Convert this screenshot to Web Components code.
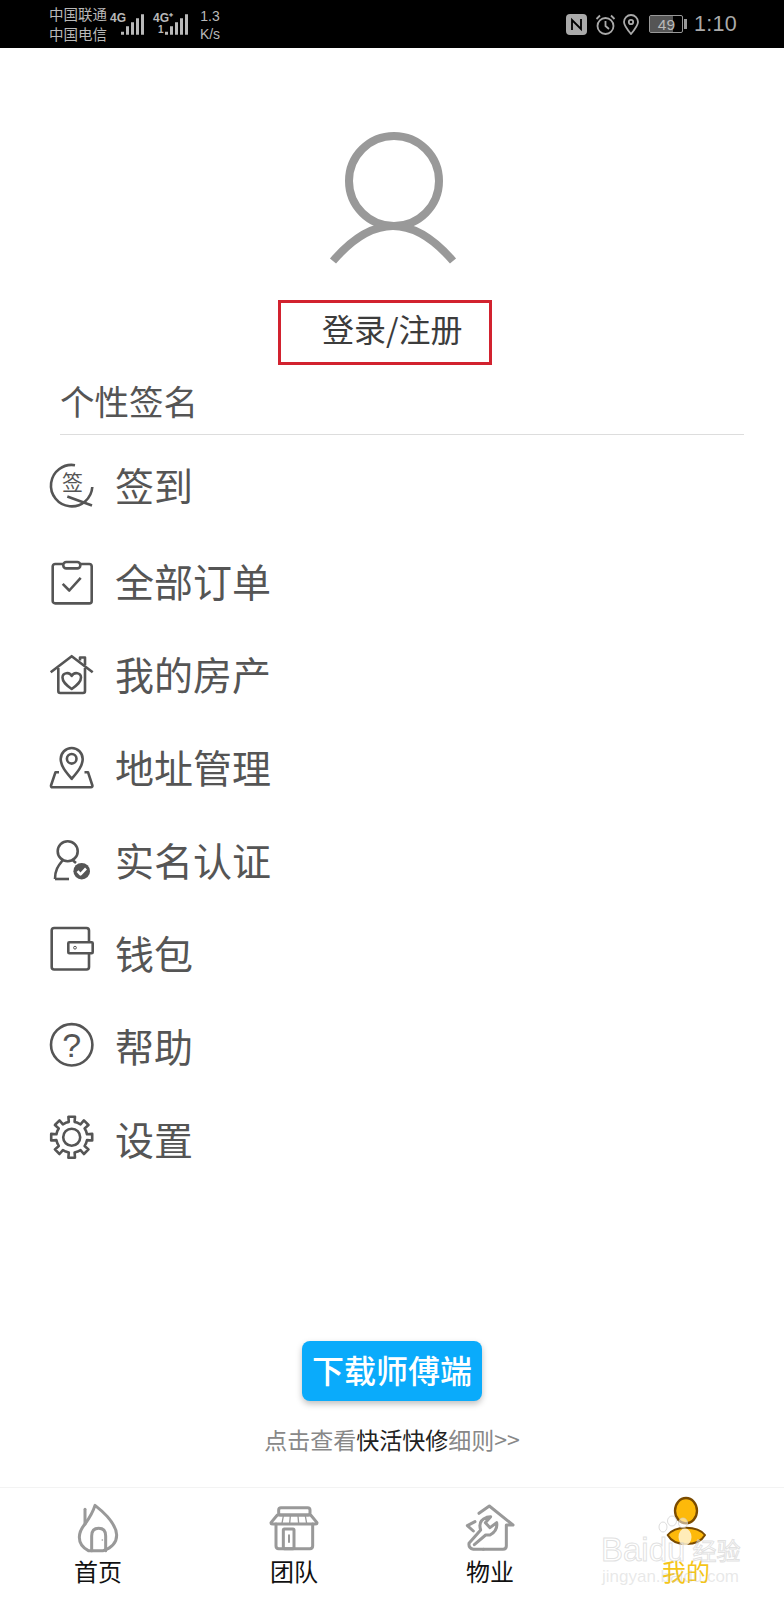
<!DOCTYPE html>
<html lang="zh">
<head>
<meta charset="utf-8">
<title>我的</title>
<style>
    html, body { margin: 0; padding: 0; background: #fff; }
    body { font-family: "Noto Sans CJK SC", "Noto Sans", sans-serif; }
</style>
</head>
<body>
<app-page>
    <status-bar></status-bar>
    <user-card name="登录/注册" sign="个性签名"></user-card>
    <menu-list>
        <menu-row icon="sign">签到</menu-row>
        <menu-row icon="order" style="margin-top:3px">全部订单</menu-row>
        <menu-row icon="house">我的房产</menu-row>
        <menu-row icon="pin">地址管理</menu-row>
        <menu-row icon="person">实名认证</menu-row>
        <menu-row icon="wallet">钱包</menu-row>
        <menu-row icon="help">帮助</menu-row>
        <menu-row icon="gear">设置</menu-row>
    </menu-list>
    <promo-block></promo-block>
    <tab-bar>
        <tab-item icon="home">首页</tab-item>
        <tab-item icon="team">团队</tab-item>
        <tab-item icon="estate">物业</tab-item>
        <tab-item icon="mine" active>我的</tab-item>
    </tab-bar>
    <baidu-mark></baidu-mark>
</app-page>

<script>
function gearPath(cx, cy, outer, root, teeth) {
    var pts = [];
    var step = Math.PI * 2 / teeth;
    for (var i = 0; i < teeth; i++) {
        var a = i * step - Math.PI / 2;
        [[-0.5, root], [-0.24, root], [-0.2, outer], [0.2, outer], [0.24, root], [0.5, root]].forEach(function (p) {
            var t = a + p[0] * step;
            pts.push((cx + Math.cos(t) * p[1]).toFixed(1) + ' ' + (cy + Math.sin(t) * p[1]).toFixed(1));
        });
    }
    return 'M' + pts.join('L') + 'Z';
}

var MENU_ICONS = {
    sign: `<path d="M25 .2A20.7 20.7 0 1 0 42.3 22"/><path d="M17.3 31.5 42 40.5"/>
        <text x="22.400" y="25" text-anchor="middle" font-size="21" fill="#555" stroke="none" font-family="Noto Sans CJK SC, sans-serif">签</text>`,
    order: `<rect x="2.700" y="3" width="39" height="39.400" rx="2.500"/>
        <rect x="13.300" y="1" width="17" height="6.400" rx="3" fill="#fff"/>
        <path d="M12.700 22.800 19.300 29.500 30.700 16.800"/>`,
    house: `<path d="M.7 18.200 21.700 2.200 42.700 18.200"/><path d="M8.300 14V37a2 2 0 0 0 2 2H33a2 2 0 0 0 2-2V14"/>
        <path d="M30 6.500V3.500h5V11"/>
        <path d="M21.700 35C16 31 12.500 28 12.500 23.500C12.500 18.500 19.500 17.500 21.700 22C24 17.500 31 18.500 31 23.500C31 28 27.400 31 21.700 35Z"/>`,
    pin: `<path d="M21.700 31.800C16 25 10.700 19 10.700 12A11 11 0 0 1 32.700 12C32.700 19 27.400 25 21.700 31.800Z"/>
        <circle cx="21.700" cy="11.800" r="4.800"/>
        <path d="M9 25.200H5.500L1 38.500Q.8 40.200 2.500 40.200H41Q42.700 40.200 42.400 38.500L38 25.200H34.500"/>`,
    person: `<circle cx="17.700" cy="11.200" r="10"/><path d="M5 39C5 30 8 26 12.500 20.500"/><path d="M5 39H19"/><path d="M23 20.500 26 23"/>
        <circle cx="31.700" cy="31.200" r="8.300" fill="#555" stroke="none"/>
        <path d="M27.500 31.200 30.500 34.400 36 28.500" stroke="#fff"/>`,
    wallet: `<path d="M39 8V-2.500A2.500 2.500 0 0 0 36.500 -5H4.200A2.500 2.500 0 0 0 1.700 -2.500V34A2.500 2.500 0 0 0 4.200 36.500H36.500A2.500 2.500 0 0 0 39 34V21"/>
        <rect x="18.300" y="9.200" width="24.400" height="11" rx="1"/>
        <circle cx="25" cy="14.700" r="1.400" stroke-width="1"/>`,
    help: `<circle cx="21.700" cy="18.800" r="20.700"/>
        <text x="21.700" y="31" text-anchor="middle" font-size="34" fill="#555" stroke="none" font-family="Liberation Sans, sans-serif">?</text>`,
    gear: `<path d="${gearPath(21.7, 18.2, 20.8, 15.6, 8)}"/><circle cx="21.700" cy="18.200" r="8.500"/>`
};

var TAB_ICONS = {
    home: {
        box: '84 45 180 180',
        body: `<path d="M135 88V132"/>
            <path d="M135 132Q118 152 118 172Q118 198 145 212H190Q230 198 230 165Q228 125 165 76Q158 100 135 132Z"/>
            <path d="M155 212V168Q155 145 176 145Q197 145 197 168V212"/>
            <circle cx="187" cy="180" r="2.500" fill="#999" stroke="none"/>`
    },
    team: {
        box: '672 45 180 180',
        body: `<rect x="716" y="83" width="94" height="22" rx="7"/>
            <path d="M712 105H812L831 128Q831 132 825 132H699Q693 132 693 128Z"/>
            <path d="M730 108 726 130M751 108 749 130M774 108 776 130M796 108 800 130" stroke-width="4"/>
            <path d="M708 132V198Q708 206 716 206H810Q818 206 818 198V132"/>
            <rect x="730" y="147" width="32" height="59" rx="3"/>
            <path d="M747 166V186" stroke-width="6"/>`
    },
    estate: {
        box: '60 45 180 180',
        body: `<path d="M117 100 148 78 219 135 199 135V198Q199 208 189 208H130"/>
            <path d="M105 125 82 137 100 153"/>
            <path d="M130 208 100 208Q85 205 87 190L122 150Q113 122 140 112L152 110 136 128 150 143 170 128Q174 152 150 165L137 165L103 194"/>`
    },
    mine: {
        box: '648 45 180 180',
        body: `<ellipse cx="738" cy="92" rx="33" ry="38" fill="#fdb90a" stroke="#7a4b00" stroke-width="7"/>
            <path d="M683 165Q700 143 738 143Q778 143 795 165Q780 192 738 192Q698 192 683 165Z" fill="#fdb90a" stroke="#7a4b00" stroke-width="6"/>`
    }
};

customElements.define('app-page', class extends HTMLElement {
    constructor() {
        super();
        this.attachShadow({ mode: 'open' }).innerHTML = `
        <style>
            :host {
                display: flex;
                flex-direction: column;
                position: relative;
                width: 784px;
                height: 1600px;
                overflow: hidden;
                background: #fff;
            }
        </style>
        <slot></slot>`;
    }
});

customElements.define('status-bar', class extends HTMLElement {
    constructor() {
        super();
        var bars = `<rect x="0" y="17.500" width="3" height="3"/><rect x="5" y="12" width="3" height="8.500"/>
            <rect x="10" y="8" width="3" height="12.500"/><rect x="15" y="4" width="3" height="16.500"/><rect x="20" y="0" width="3" height="20.500"/>`;
        this.attachShadow({ mode: 'open' }).innerHTML = `
        <style>
            :host {
                display: flex;
                align-items: center;
                height: 48px;
                flex: none;
                padding: 0 47px 0 49px;
                box-sizing: border-box;
                background: #000;
                color: #b9b9b9;
            }
            .carrier {
                display: flex;
                flex-direction: column;
                font-size: 14.500px;
                line-height: 20px;
                width: 61px;
            }
            .net { display: flex; align-items: flex-start; width: 43px; height: 24px; position: relative; }
            .net b { font: bold 12px/12px "Liberation Sans Narrow", "Liberation Sans", sans-serif; margin-top: 0; }
            .net b.two { position: absolute; left: 5px; top: 12px; margin: 0; font-size: 10px; }
            .net svg { position: absolute; right: 9px; top: 2px; }
            .speed {
                font: 14px/18px "Liberation Sans", sans-serif;
                margin-left: -4px;
                margin-top: 1px;
                text-align: center;
                width: 24px;
            }
            .right { display: flex; align-items: center; margin-left: auto; }
            .right svg { display: block; }
            .battery {
                display: flex;
                align-items: center;
                justify-content: center;
                width: 34px;
                height: 18px;
                box-sizing: border-box;
                border: 1px solid #999;
                border-radius: 2px;
                margin-left: 9px;
                font: 15.500px/15px "Liberation Sans", sans-serif;
                background: linear-gradient(90deg, #555 72%, #000 72%);
                background-clip: padding-box;
                position: relative;
            }
            .nub { width: 2.500px; height: 10px; background: #999; margin: 0 7px 0 1px; }
            .time { font: 21.500px/24px "Liberation Sans", sans-serif; letter-spacing: .3px; color: #aaa; }
        </style>
        <div class="carrier"><span>中国联通</span><span>中国电信</span></div>
        <div class="net"><b>4G</b><svg width="23" height="21" viewBox="0 0 23 20.500" fill="#b9b9b9">${bars}</svg></div>
        <div class="net" style="width:49px"><b>4G⁺</b><b class="two">1</b><svg width="23" height="21" viewBox="0 0 23 20.500" fill="#b9b9b9" style="right:14px">${bars}</svg></div>
        <div class="speed">1.3<br>K/s</div>
        <div class="right">
            <svg width="21" height="21" viewBox="0 0 21 21"><rect width="21" height="21" rx="4" fill="#aaa"/>
                <path d="M6 16V6L15 15V5" stroke="#000" stroke-width="1.800" fill="none"/></svg>
            <svg width="21" height="21" viewBox="0 0 21 21" fill="none" stroke="#aaa" stroke-width="1.800" style="margin-left:8px">
                <circle cx="10.500" cy="12" r="8"/><path d="M10.500 7V12L14 15M1.500 5 5 1.500M19.500 5 16 1.500"/></svg>
            <svg width="18" height="21" viewBox="0 0 18 21" fill="none" stroke="#aaa" stroke-width="1.800" style="margin-left:6px">
                <path d="M9 20C4 14 2 11 2 8A7 7 0 0 1 16 8C16 11 14 14 9 20Z"/><circle cx="9" cy="8" r="2.200"/></svg>
            <div class="battery">49</div><div class="nub"></div>
            <div class="time">1:10</div>
        </div>`;
    }
});

customElements.define('user-card', class extends HTMLElement {
    constructor() {
        super();
        this.attachShadow({ mode: 'open' }).innerHTML = `
        <style>
            :host { display: block; flex: none; padding-top: 84px; }
            svg { display: block; margin-left: 326px; }
            .login {
                width: 214px;
                height: 65px;
                box-sizing: border-box;
                margin: 32px 0 0 278px;
                padding-left: 41px;
                border: 3px solid #d2222f;
                color: #3c3c3c;
                font-size: 32px;
                line-height: 50px;
                white-space: nowrap;
            }
            .sign {
                height: 70px;
                box-sizing: border-box;
                margin: 0 40px 0 60px;
                border-bottom: 1px solid #ddd;
                color: #555;
                font-size: 34.500px;
                line-height: 70px;
            }
        </style>
        <svg width="136" height="136" viewBox="326 132 136 136" fill="none" stroke="#999" stroke-width="8">
            <circle cx="394" cy="181" r="45"/>
            <path d="M333 261Q393 191 453 261"/>
        </svg>
        <div class="login"></div>
        <div class="sign"></div>`;
    }
    connectedCallback() {
        this.shadowRoot.querySelector('.login').textContent = this.getAttribute('name');
        this.shadowRoot.querySelector('.sign').textContent = this.getAttribute('sign');
    }
});

customElements.define('menu-list', class extends HTMLElement {
    constructor() {
        super();
        this.attachShadow({ mode: 'open' }).innerHTML = `
        <style>
            :host { display: flex; flex-direction: column; flex: none; margin-top: 5px; }
        </style>
        <slot></slot>`;
    }
});

customElements.define('menu-row', class extends HTMLElement {
    constructor() {
        super();
        this.attachShadow({ mode: 'open' }).innerHTML = `
        <style>
            :host {
                display: flex;
                align-items: center;
                height: 93px;
                padding-left: 50px;
                color: #555;
                font-size: 39px;
            }
            svg { display: block; flex: none; overflow: visible; margin-right: 21px; }
            span { line-height: 50px; margin-bottom: 6px; }
        </style>
        <svg width="44" height="44" viewBox="0 0 44 44" fill="none" stroke="#555" stroke-width="2.600" stroke-linejoin="round"></svg>
        <span><slot></slot></span>`;
    }
    connectedCallback() {
        this.shadowRoot.querySelector('svg').innerHTML = MENU_ICONS[this.getAttribute('icon')];
    }
});

customElements.define('promo-block', class extends HTMLElement {
    constructor() {
        super();
        this.attachShadow({ mode: 'open' }).innerHTML = `
        <style>
            :host {
                display: flex;
                flex-direction: column;
                align-items: center;
                flex: none;
                margin-top: 154px;
            }
            .btn {
                width: 180px;
                height: 60px;
                border-radius: 8px;
                background: #0aabfb;
                box-shadow: 0 3px 6px rgba(0,0,0,.25);
                color: #fff;
                font-size: 32px;
                font-weight: 500;
                line-height: 56px;
                text-align: center;
                white-space: nowrap;
            }
            .tip {
                margin-top: 23px;
                font-size: 23px;
                line-height: 30px;
                color: #888;
                white-space: nowrap;
            }
            .tip b { font-weight: 400; color: #222; }
        </style>
        <div class="btn">下载师傅端</div>
        <div class="tip">点击查看<b>快活快修</b>细则&gt;&gt;</div>`;
    }
});

customElements.define('tab-bar', class extends HTMLElement {
    constructor() {
        super();
        this.attachShadow({ mode: 'open' }).innerHTML = `
        <style>
            :host {
                display: grid;
                grid-template-columns: repeat(4, 1fr);
                flex: none;
                margin-top: auto;
                height: 113px;
                box-sizing: border-box;
                padding-top: 7px;
                border-top: 1px solid #f3f3f3;
            }
        </style>
        <slot></slot>`;
    }
});

customElements.define('tab-item', class extends HTMLElement {
    constructor() {
        super();
        this.attachShadow({ mode: 'open' }).innerHTML = `
        <style>
            :host {
                display: flex;
                flex-direction: column;
                align-items: center;
                color: #111;
                font-size: 24px;
                line-height: 30px;
            }
            :host([active]) { color: #f5c518; }
            svg { display: block; overflow: visible; margin-bottom: 1px; }
        </style>
        <svg width="60" height="60" fill="none" stroke="#999" stroke-width="9" stroke-linejoin="round" stroke-linecap="round"></svg>
        <slot></slot>`;
    }
    connectedCallback() {
        var icon = TAB_ICONS[this.getAttribute('icon')];
        var svg = this.shadowRoot.querySelector('svg');
        svg.setAttribute('viewBox', icon.box);
        svg.innerHTML = icon.body;
    }
});

customElements.define('baidu-mark', class extends HTMLElement {
    constructor() {
        super();
        this.attachShadow({ mode: 'open' }).innerHTML = `
        <style>
            :host {
                position: absolute;
                left: 601px;
                top: 1512px;
                width: 145px;
                height: 76px;
                pointer-events: none;
                color: rgba(255,255,255,.35);
                font-family: "Liberation Sans", sans-serif;
            }
            svg { position: absolute; left: 0; top: 0; overflow: visible; }
            .logo {
                position: absolute;
                left: 0;
                top: 21px;
                display: flex;
                align-items: center;
                height: 34px;
                white-space: nowrap;
                font-size: 33px;
                -webkit-text-stroke: 1px rgba(205,205,205,.6);
            }
            .logo i {
                font: normal 24px/34px "Noto Sans CJK SC", sans-serif;
                margin-left: 7px;
            }
            .url {
                position: absolute;
                left: 1px;
                top: 55px;
                font-size: 17px;
                line-height: 20px;
                white-space: nowrap;
                color: rgba(190,190,190,.35);
            }
        </style>
        <svg width="145" height="40" viewBox="0 0 145 40" fill="rgba(255,255,255,.5)" stroke="rgba(205,205,205,.7)">
            <ellipse cx="62" cy="15" rx="4" ry="5"/><ellipse cx="71" cy="9" rx="4.500" ry="5"/><ellipse cx="82" cy="11" rx="4.500" ry="5"/>
            <ellipse cx="84" cy="25" rx="6.500" ry="8.500" fill="rgba(255,245,215,.85)" stroke="none"/>
        </svg>
        <div class="logo">Baidu<i>经验</i></div>
        <div class="url">jingyan.baidu.com</div>`;
    }
});
</script>
</body>
</html>
